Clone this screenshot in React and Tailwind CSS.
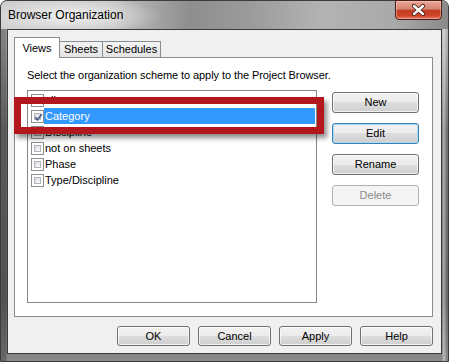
import React from 'react';

const btnBase =
  "flex items-center justify-center rounded-[3px] border text-[11px] leading-none";
const btnNormal =
  "border-[#707070] bg-[linear-gradient(to_bottom,#f2f2f2_0%,#ebebeb_50%,#dddddd_50%,#cfcfcf_100%)] shadow-[inset_0_0_0_1px_rgba(255,255,255,0.7)] text-black";
const btnFocused =
  "border-[#3c7fb1] bg-[linear-gradient(to_bottom,#f2f2f2_0%,#ebebeb_50%,#dddddd_50%,#cfcfcf_100%)] shadow-[inset_0_0_0_1px_#a8dcf5] text-black";
const btnDisabled = "border-[#adb2b5] bg-[#f4f4f4] text-[#8b8b8b]";

function Button({ label, variant = 'normal', size = 'side' }) {
    const look = variant === 'focused' ? btnFocused : variant === 'disabled' ? btnDisabled : btnNormal;
    const dims = size === 'side' ? "h-[21px] w-[87px]" : "h-[20px] w-[73px]";
    return <div className={`${btnBase} ${look} ${dims}`}>{label}</div>;
}

function Check({ checked }) {
    return (
        <span className="relative flex h-[13px] w-[13px] shrink-0 border border-[#8e8f8f] bg-white p-[2px]">
            <span className="block h-full w-full border border-[#b3b7bc] bg-[linear-gradient(135deg,#d6d9de,#fbfbfb)]" />
            {checked && (
                <svg className="absolute left-[1px] top-[1px]" width="11" height="11" viewBox="0 0 11 11">
                    <path d="M2.2 5.2 L4.4 7.8 L8.8 2.2" fill="none" stroke="#4a5a8f" strokeWidth="1.7" />
                </svg>
            )}
        </span>
    );
}

const items = [
    { label: 'all' },
    { label: 'Category', checked: true, selected: true },
    { label: 'Discipline' },
    { label: 'not on sheets' },
    { label: 'Phase' },
    { label: 'Type/Discipline' },
];

export default function App() {
    return (
        <div className="relative h-[362px] w-[449px] overflow-hidden bg-white font-['Liberation_Sans',Arial,sans-serif]">
            {/* window frame */}
            <div className="flex h-full w-full flex-col rounded-t-[7px] border border-[#3c3c3c] bg-[linear-gradient(to_right,rgba(40,40,40,0.35)_0px,rgba(40,40,40,0.35)_5px,transparent_6px,transparent_441px,rgba(255,255,255,0.35)_442px,rgba(255,255,255,0.35)_444px,transparent_445px),linear-gradient(to_bottom,#c6c6c6_0px,#a8a8a8_50px,#737373_130px,#686868_300px,#8a8a8a_100%)]">
                {/* title bar */}
                <div className="flex h-[28px] shrink-0 items-start justify-between rounded-t-[6px] bg-[radial-gradient(ellipse_90px_20px_at_70px_15px,rgba(255,255,255,0.75),transparent),linear-gradient(to_right,#cdcdcd_0%,#c2c2c2_25%,#8e8e8e_42%,#9a9a9a_55%,#b3b3b3_72%,#a9a9a9_88%,#8a8a8a_100%)]">
                    <span className="pl-[7px] pt-[7px] text-[12px] leading-[14px] text-black">Browser Organization</span>
                    <div className="mr-[6px] -mt-[1px] h-[20px] w-[47px] rounded-b-[4px] border border-[#4a1e16] bg-[linear-gradient(to_bottom,#e7a898_0%,#d98270_45%,#c23d25_52%,#cf4428_80%,#e67a60_100%)] shadow-[inset_0_0_0_1px_rgba(255,210,200,0.45)]">
                        <svg width="45" height="18" viewBox="0 0 45 18">
                            <path d="M18 5 L27 13 M27 5 L18 13" stroke="#4a1e16" strokeWidth="4.2" strokeLinecap="round" />
                            <path d="M18 5 L27 13 M27 5 L18 13" stroke="#ffffff" strokeWidth="2.4" strokeLinecap="round" />
                        </svg>
                    </div>
                </div>

                {/* client area */}
                <div className="mx-[6px] flex h-[325px] flex-col border border-[#3a3a3a] bg-[#f0f0f0] pl-[6px] pr-[8px] pt-[7px] text-[11px] text-black">
                    {/* tabs */}
                    <div className="flex h-[20px] items-end">
                        <div className="relative z-10 -mb-[1px] flex h-[21px] w-[46px] items-center justify-center border border-b-0 border-[#898c95] bg-white">
                            Views
                        </div>
                        <div className="flex h-[16px] w-[43px] items-center justify-center border border-b-0 border-l-0 border-[#898c95] bg-[linear-gradient(to_bottom,#f3f3f3,#e4e4e4)]">
                            Sheets
                        </div>
                        <div className="flex h-[16px] w-[58px] items-center justify-center border border-b-0 border-l-0 border-[#898c95] bg-[linear-gradient(to_bottom,#f3f3f3,#e4e4e4)]">
                            Schedules
                        </div>
                    </div>

                    {/* tab panel */}
                    <div className="flex h-[260px] w-[419px] flex-col border border-[#898c95] bg-white pl-[12px] pt-[11px]">
                        <p className="h-[13px] leading-[13px] tracking-[-0.08px]">Select the organization scheme to apply to the Project Browser.</p>
                        <div className="mt-[8px] flex">
                            <div className="h-[213px] w-[290px] border border-[#828790] bg-white pt-[1px]">
                                {items.map((it) => (
                                    <div key={it.label} className="flex h-[16px] items-center pl-[3px]">
                                        <Check checked={it.checked} />
                                        <span
                                            className={`mr-[1px] flex h-[16px] flex-1 items-center pl-[1px] ${it.selected ? 'bg-[#3399ff] text-white' : ''}`}
                                        >
                                            {it.label}
                                        </span>
                                    </div>
                                ))}
                            </div>
                            <div className="ml-[15px] mt-[2px] flex flex-col gap-[10px]">
                                <Button label="New" />
                                <Button label="Edit" variant="focused" />
                                <Button label="Rename" />
                                <Button label="Delete" variant="disabled" />
                            </div>
                        </div>
                    </div>

                    {/* dialog buttons */}
                    <div className="mt-[9px] flex justify-end gap-[8px]">
                        <Button label="OK" size="bottom" />
                        <Button label="Cancel" size="bottom" />
                        <Button label="Apply" size="bottom" />
                        <Button label="Help" size="bottom" />
                    </div>
                </div>
            </div>

            {/* red highlight box drawn over the list */}
            <div className="absolute left-[14px] top-[97px] h-[37px] w-[310px] border-[7px] border-[#b3161d] shadow-[3px_4px_5px_rgba(0,0,0,0.45)]" />
        </div>
    );
}
